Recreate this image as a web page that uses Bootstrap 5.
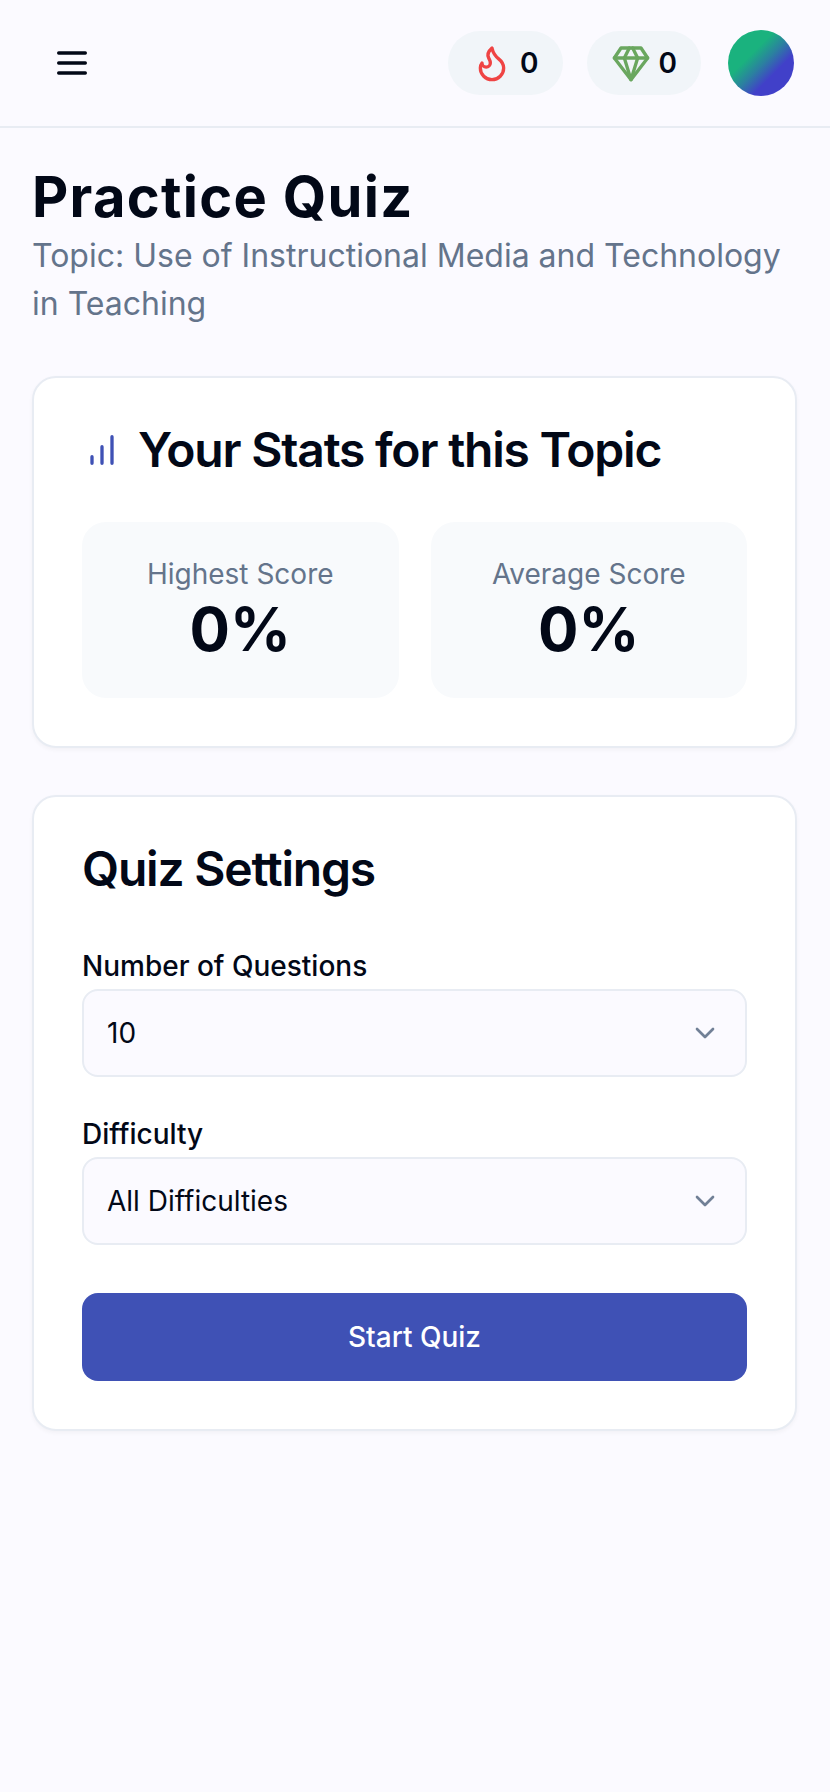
<!DOCTYPE html>
<html lang="en">

<head>
    <meta charset="UTF-8">
    <meta name="viewport" content="width=device-width, initial-scale=1.0">
    <title>Practice Quiz</title>
    <link href="https://cdn.jsdelivr.net/npm/bootstrap@5.3.0/dist/css/bootstrap.min.css" rel="stylesheet">
    <style>
        body {
            font-family: Inter, "Noto Sans", sans-serif;
            background-color: #fbfaff;
            color: #020817;
            min-height: 1792px;
        }

        .top-bar {
            height: 128px;
            padding: 0 36px 0 52px;
            border-bottom: 2px solid #e8ecf3;
        }

        .menu-btn {
            padding: 0;
            border: 0;
            line-height: 0;
        }

        .stat-pill {
            height: 64px;
            padding: 0 24px;
            gap: 8px;
            border-radius: 32px;
            background-color: #f1f5f9;
            font-size: 28px;
            font-weight: 600;
        }

        .user-dot {
            width: 66px;
            height: 66px;
            margin-left: 3px;
            border-radius: 50%;
            background: linear-gradient(135deg, #1ab27e 36%, #2b80a0 52%, #4140c9 68%);
        }

        .page-body {
            padding: 35px 33px 0 32px;
        }

        .page-title {
            font-size: 56px;
            line-height: 69px;
            font-weight: 700;
            letter-spacing: 1.3px;
            margin: 0;
        }

        .page-topic {
            font-size: 32px;
            line-height: 48px;
            color: #64748b;
            margin: 0 0 48px;
        }

        .panel {
            border: 2px solid #e8ecf3;
            border-radius: 24px;
            padding: 48px;
            margin-bottom: 47px;
            background-color: #fff;
            box-shadow: 0 2px 4px rgba(2, 8, 23, .04);
        }

        .panel-title {
            font-size: 48px;
            line-height: 48px;
            font-weight: 600;
            letter-spacing: -1.2px;
            margin: 0;
        }

        .settings-title {
            margin-bottom: 53px;
        }

        .score-row {
            gap: 32px;
        }

        .score-tile {
            flex: 1 1 0;
            height: 176px;
            padding-top: 32px;
            border-radius: 24px;
            background-color: #f8fafc;
            text-align: center;
        }

        .score-label {
            font-size: 28px;
            line-height: 40px;
            color: #64748b;
        }

        .score-value {
            font-size: 60px;
            line-height: 70px;
            font-weight: 700;
        }

        .field-label {
            display: block;
            font-size: 28px;
            line-height: 40px;
            font-weight: 500;
            margin: 0 0 3px;
        }

        .field-select {
            height: 88px;
            padding: 0 23px;
            font-size: 28px;
            color: #020817;
            background-color: #fbfaff;
            border: 2px solid #e8ecf3;
            border-radius: 16px;
            background-size: 32px;
            background-position: right 24px center;
            background-image: url("data:image/svg+xml,%3csvg xmlns='http://www.w3.org/2000/svg' viewBox='0 0 24 24' fill='none' stroke='%23718096' stroke-width='2' stroke-linecap='round' stroke-linejoin='round'%3e%3cpath d='m6 9 6 6 6-6'/%3e%3c/svg%3e");
        }

        .field-gap {
            margin-bottom: 37px;
        }

        .start-btn {
            height: 88px;
            font-size: 28px;
            font-weight: 500;
            border: 0;
            border-radius: 16px;
            background-color: #3f51b5;
            color: #fff;
        }
    </style>
</head>

<body>
    <header class="top-bar d-flex align-items-center justify-content-between">
        <button class="btn menu-btn" type="button" aria-label="Menu">
            <svg width="40" height="40" viewBox="0 0 24 24" fill="none" stroke="#020817" stroke-width="2" stroke-linecap="round" stroke-linejoin="round">
                <path d="M4 12h16M4 6h16M4 18h16" />
            </svg>
        </button>
        <div class="d-flex align-items-center gap-4">
            <div class="stat-pill d-flex align-items-center">
                <svg width="40" height="40" viewBox="0 0 24 24" fill="none" stroke="#ef4444" stroke-width="2" stroke-linecap="round" stroke-linejoin="round">
                    <path d="M8.5 14.5A2.5 2.5 0 0 0 11 12c0-1.38-.5-2-1-3-1.072-2.143-.224-4.054 2-6 .5 2.5 2 4.9 4 6.5 2 1.6 3 3.5 3 5.5a7 7 0 1 1-14 0c0-1.153.433-2.294 1-3a2.5 2.5 0 0 0 2.5 2.5z" />
                </svg>
                <span>0</span>
            </div>
            <div class="stat-pill d-flex align-items-center">
                <svg width="40" height="40" viewBox="0 0 24 24" fill="none" stroke="#6aa75f" stroke-width="2" stroke-linecap="round" stroke-linejoin="round">
                    <path d="M6 3h12l4 6-10 13L2 9Z" />
                    <path d="M11 3 8 9l4 13 4-13-3-6" />
                    <path d="M2 9h20" />
                </svg>
                <span>0</span>
            </div>
            <div class="user-dot"></div>
        </div>
    </header>

    <main class="page-body">
        <h1 class="page-title">Practice Quiz</h1>
        <p class="page-topic">Topic: Use of Instructional Media and Technology in Teaching</p>

        <section class="panel">
            <div class="d-flex align-items-center mb-5">
                <svg class="me-3" width="40" height="40" viewBox="0 0 24 24" fill="none" stroke="#3f51b5" stroke-width="2" stroke-linecap="round" stroke-linejoin="round">
                    <path d="M12 20V10M18 20V4M6 20v-4" />
                </svg>
                <h2 class="panel-title">Your Stats for this Topic</h2>
            </div>
            <div class="score-row d-flex">
                <div class="score-tile">
                    <div class="score-label">Highest Score</div>
                    <div class="score-value">0%</div>
                </div>
                <div class="score-tile">
                    <div class="score-label">Average Score</div>
                    <div class="score-value">0%</div>
                </div>
            </div>
        </section>

        <section class="panel">
            <h2 class="panel-title settings-title">Quiz Settings</h2>
            <label class="field-label" for="questionCount">Number of Questions</label>
            <select class="form-select field-select field-gap" id="questionCount">
                <option>10</option>
            </select>
            <label class="field-label" for="difficulty">Difficulty</label>
            <select class="form-select field-select mb-5" id="difficulty">
                <option>All Difficulties</option>
            </select>
            <button class="btn start-btn w-100" type="button">Start Quiz</button>
        </section>
    </main>

    <script src="https://cdn.jsdelivr.net/npm/bootstrap@5.3.0/dist/js/bootstrap.bundle.min.js"></script>
</body>

</html>
